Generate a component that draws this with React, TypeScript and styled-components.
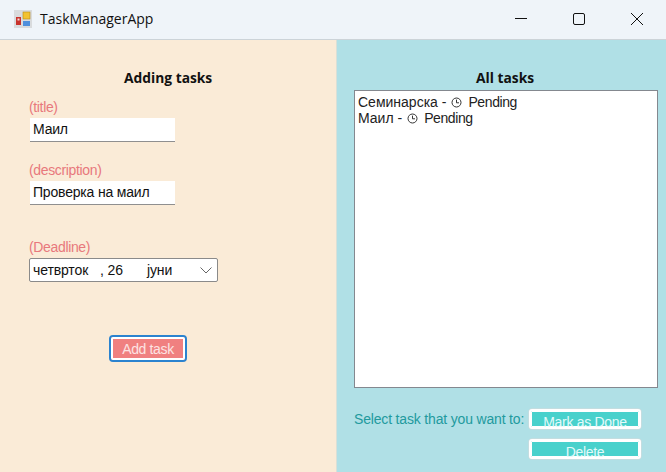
import React from 'react'
import styled, { createGlobalStyle } from 'styled-components'

const GlobalStyle = createGlobalStyle`
  html, body {
    margin: 0;
    padding: 0;
    background: #faebd7;
  }
  body {
    font-family: "Liberation Sans", Arial, sans-serif;
    overflow: hidden;
  }
`

const Window = styled.div`
  width: 666px;
  height: 472px;
  display: flex;
  flex-direction: column;
  overflow: hidden;
`

const TitleBar = styled.header`
  height: 37px;
  flex: none;
  display: flex;
  align-items: center;
  padding: 0 0 2px 14px;
  background: #eff4f9;
  border-bottom: 1px solid #ccd3d8;
`

const AppTitle = styled.span`
  margin-left: 8px;
  font-family: "Open Sans", sans-serif;
  font-size: 14px;
  color: #111;
`

const WindowButtons = styled.div`
  margin-left: auto;
  display: flex;
`

const WindowButton = styled.div`
  width: 58px;
  height: 37px;
  display: flex;
  align-items: center;
  justify-content: center;
`

const Body = styled.main`
  flex: 1;
  display: flex;
  min-height: 0;
`

const AddPanel = styled.section`
  width: 337px;
  flex: none;
  box-sizing: border-box;
  padding: 29px 0 0 29px;
  background: #faebd7;
  border-right: 1px solid #d9e0d8;
  display: flex;
  flex-direction: column;
  align-items: flex-start;
`

const ListPanel = styled.section`
  flex: 1;
  box-sizing: border-box;
  padding: 29px 8px 0 17px;
  background: #b0e0e6;
  display: flex;
  flex-direction: column;
`

const Heading = styled.h2<{ $left: number }>`
  margin: 0 0 0 ${(p) => p.$left}px;
  font-family: "Open Sans", sans-serif;
  font-size: 13.8px;
  line-height: 18px;
  font-weight: 700;
  color: #111;
`

const FieldLabel = styled.label<{ $top: number }>`
  margin-top: ${(p) => p.$top}px;
  font-size: 14px;
  letter-spacing: -0.35px;
  line-height: 16px;
  color: #e8787c;
`

const TextBox = styled.div`
  margin-top: 3px;
  margin-left: 1px;
  width: 145px;
  height: 24px;
  box-sizing: border-box;
  padding-left: 3px;
  background: #fff;
  border-bottom: 1px solid #8f8f8f;
  font-size: 14px;
  letter-spacing: -0.19px;
  line-height: 23px;
  color: #111;
`

const DateBox = styled.div`
  margin-top: 3px;
  width: 189px;
  height: 24px;
  box-sizing: border-box;
  display: flex;
  align-items: center;
  padding: 0 5px 0 3px;
  background: #fff;
  border: 1px solid #8a8a8a;
  border-radius: 2px;
  font-size: 14px;
  letter-spacing: -0.12px;
  color: #111;
`

const DatePart = styled.span<{ $width: number }>`
  width: ${(p) => p.$width}px;
  white-space: nowrap;
`

const Chevron = styled.svg`
  margin-left: auto;
`

const AddButton = styled.button`
  margin: 53px 0 0 80px;
  width: 78px;
  height: 27px;
  padding: 0;
  box-sizing: border-box;
  background: #f08080;
  border: 2px solid #2b83cf;
  outline: 2px solid #fff;
  outline-offset: -4px;
  border-radius: 4px;
  font-family: "Liberation Sans", Arial, sans-serif;
  font-size: 14px;
  letter-spacing: -0.35px;
  color: #fde3e3;
`

const TaskList = styled.ul`
  list-style: none;
  margin: 3px 0 0;
  padding: 3px 0 0 3px;
  height: 298px;
  box-sizing: border-box;
  background: #fff;
  border: 1px solid #84888f;
  font-size: 14px;
  line-height: 16px;
  color: #222;
`

const TaskItem = styled.li`
  display: flex;
  align-items: center;
  white-space: nowrap;
`

const ClockIcon = styled.svg`
  margin: 0 6px 0 5px;
  flex: none;
`

const StatusText = styled.span`
  letter-spacing: -0.4px;
`

const ActionRow = styled.div<{ $top: number }>`
  margin-top: ${(p) => p.$top}px;
  display: flex;
  align-items: center;
  height: 20px;
`

const ActionLabel = styled.span`
  width: 175px;
  flex: none;
  font-size: 14px;
  letter-spacing: -0.17px;
  color: #229a9e;
  white-space: nowrap;
`

const ActionButton = styled.button`
  width: 112px;
  height: 20px;
  padding: 3px 0 0;
  box-sizing: border-box;
  background: #48d1cc;
  border: 2px solid #fff;
  box-shadow: inset 0 0 0 1px #fff, 0 0 0 0.5px #d5d9da;
  border-radius: 3px;
  font-family: "Liberation Sans", Arial, sans-serif;
  font-size: 14px;
  letter-spacing: -0.3px;
  line-height: 16px;
  color: #e3fafa;
  overflow: hidden;
`

const ActionSpacer = styled.span`
  width: 175px;
  flex: none;
`

const Clock = () => (
  <ClockIcon width="11" height="11" viewBox="0 0 11 11" fill="none" stroke="#333" strokeWidth="1">
    <circle cx="5.5" cy="5.5" r="4.5" />
    <path d="M5.5 2.6V5.8H8" />
  </ClockIcon>
)

const AppLogo = () => (
  <svg width="18" height="18" viewBox="0 0 18 18">
    <rect width="18" height="18" fill="#d9dbdd" />
    <rect x="9" y="2" width="7" height="7" fill="#f2c230" stroke="#b98a16" strokeWidth="0.6" />
    <rect x="2" y="7" width="5" height="8" fill="#c8322c" />
    <rect x="3.5" y="8.5" width="2" height="2" fill="#f4d9d6" />
    <rect x="9" y="11" width="7" height="5" fill="#4f8fdc" />
  </svg>
)

const App: React.FC = () => {
  return (
    <Window>
      <GlobalStyle />
      <TitleBar>
        <AppLogo />
        <AppTitle>TaskManagerApp</AppTitle>
        <WindowButtons>
          <WindowButton>
            <svg width="12" height="12" viewBox="0 0 12 12" stroke="#111" fill="none">
              <path d="M0 5.5H12" />
            </svg>
          </WindowButton>
          <WindowButton>
            <svg width="12" height="12" viewBox="0 0 12 12" stroke="#111" fill="none">
              <rect x="0.5" y="0.5" width="11" height="11" rx="1.5" />
            </svg>
          </WindowButton>
          <WindowButton>
            <svg width="12" height="12" viewBox="0 0 12 12" stroke="#111" fill="none">
              <path d="M0 0L12 12M12 0L0 12" />
            </svg>
          </WindowButton>
        </WindowButtons>
      </TitleBar>
      <Body>
        <AddPanel>
          <Heading $left={95}>Adding tasks</Heading>
          <FieldLabel $top={12}>(title)</FieldLabel>
          <TextBox>Маил</TextBox>
          <FieldLabel $top={20}>(description)</FieldLabel>
          <TextBox>Проверка на маил</TextBox>
          <FieldLabel $top={34}>(Deadline)</FieldLabel>
          <DateBox>
            <DatePart $width={67}>четврток</DatePart>
            <DatePart $width={47}>, 26</DatePart>
            <DatePart $width={40}>јуни</DatePart>
            <Chevron width="12" height="7" viewBox="0 0 12 7" fill="none" stroke="#666">
              <path d="M0.5 0.5L6 6L11.5 0.5" />
            </Chevron>
          </DateBox>
          <AddButton>Add task</AddButton>
        </AddPanel>
        <ListPanel>
          <Heading $left={122}>All tasks</Heading>
          <TaskList>
            <TaskItem>
              Семинарска -
              <Clock />
              <StatusText>Pending</StatusText>
            </TaskItem>
            <TaskItem>
              Маил -
              <Clock />
              <StatusText>Pending</StatusText>
            </TaskItem>
          </TaskList>
          <ActionRow $top={21}>
            <ActionLabel>Select task that you want to:</ActionLabel>
            <ActionButton>Mark as Done</ActionButton>
          </ActionRow>
          <ActionRow $top={10}>
            <ActionSpacer />
            <ActionButton>Delete</ActionButton>
          </ActionRow>
        </ListPanel>
      </Body>
    </Window>
  )
}

export default App
